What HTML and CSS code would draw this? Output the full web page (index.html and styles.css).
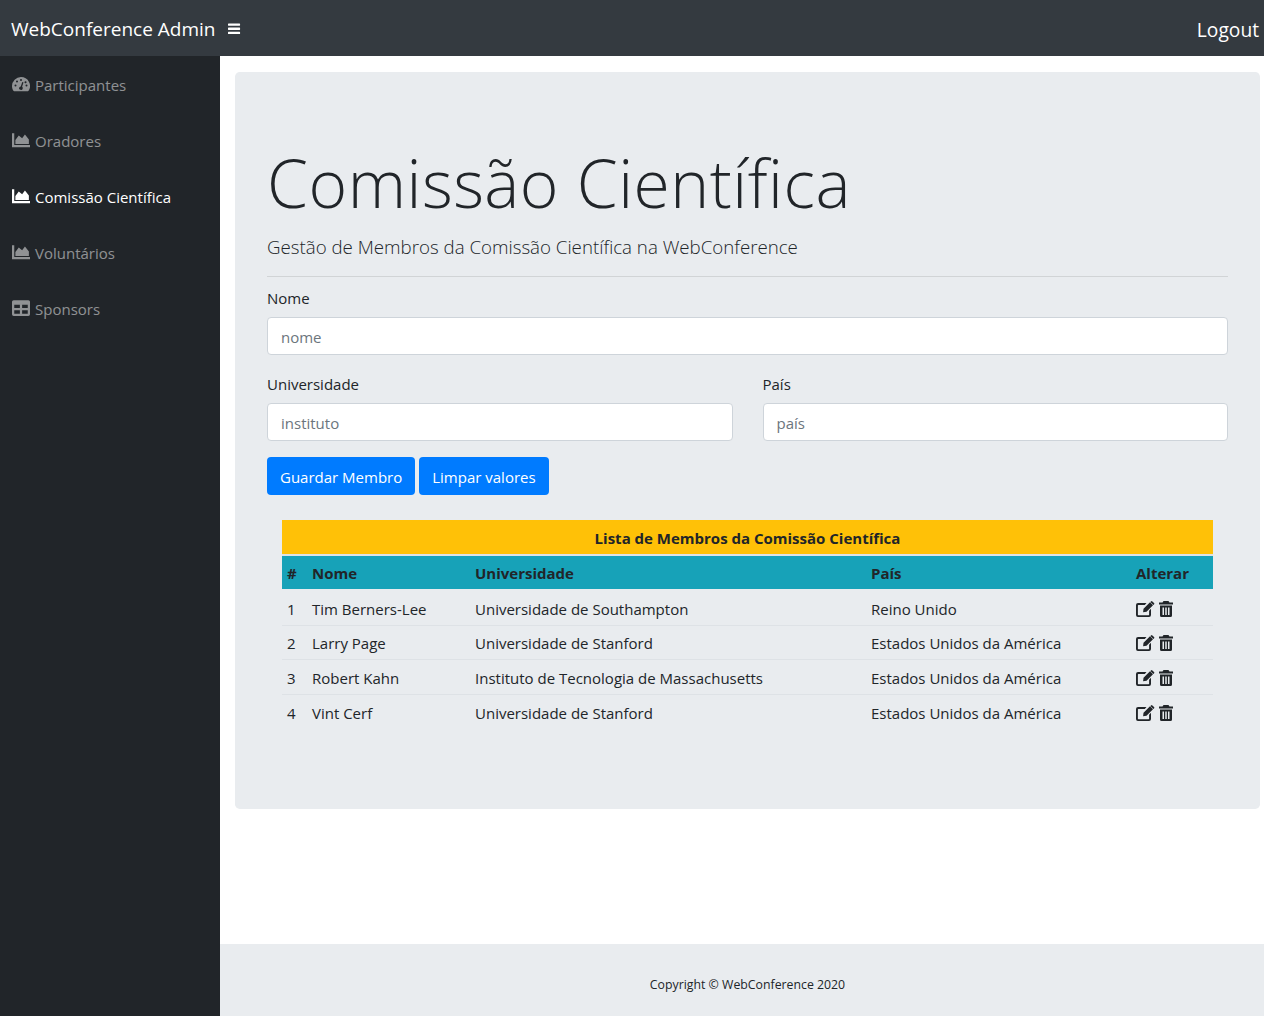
FILE: index.html
```html
<!DOCTYPE html>
<html lang="pt">
<head>
    <meta charset="UTF-8">
    <title>WebConference Admin</title>
    <link rel="stylesheet" href="styles.css">
</head>
<body>
    <!-- Barra de topo -->
    <nav class="topbar">
        <span class="brand">WebConference Admin</span>
        <svg class="burger" viewBox="0 0 14 12"><path d="M.5 0h12a.5.500 0 0 1 .5.500V2a.5.500 0 0 1-.5.500H.5A.5.500 0 0 1 0 2V.5A.5.500 0 0 1 .5 0zM.5 4.500h12a.5.500 0 0 1 .5.500v1.500a.5.500 0 0 1-.5.500H.5a.5.500 0 0 1-.5-.5V5a.5.500 0 0 1 .5-.5zM.5 9h12a.5.500 0 0 1 .5.500V11a.5.500 0 0 1-.5.500H.5A.5.500 0 0 1 0 11V9.500A.5.500 0 0 1 .5 9z" fill="currentColor"/></svg>
        <span class="logout">Logout</span>
    </nav>

    <div class="wrapper">
        <!-- Menu lateral -->
        <aside class="sidebar">
            <a class="side-link"><svg class="side-icon" viewBox="0 0 18 16"><path fill="currentColor" fill-rule="evenodd" d="M9 1a9 9 0 0 0-9 9c0 1.800.5 3.400 1.400 4.800.2.300.5.400.8.400h13.600c.3 0 .6-.1.800-.4A9 9 0 0 0 9 1zM9 3a1 1 0 1 1 0 2 1 1 0 0 1 0-2zM3.500 10.500a1 1 0 1 1 0-2 1 1 0 0 1 0 2zM5 6.500a1 1 0 1 1 0-2 1 1 0 0 1 0 2zM10.700 12.500a1.800 1.800 0 1 1-3.400-1.100c.3-.6 1-1 1.500-1l1.300-4a.7.7 0 0 1 1.300.4l-1.300 4c.5.400.8 1.100.6 1.700zM12.500 6a1 1 0 1 1 2 .5 1 1 0 0 1-2-.5zM14.500 10.500a1 1 0 1 1 0-2 1 1 0 0 1 0 2z"/></svg>Participantes</a>
            <a class="side-link"><svg class="side-icon" viewBox="0 0 16 14"><path fill="currentColor" d="M0 1h2v10.500h14V13.500H0zM3 10.500V7l3-4 3 2.500L11.500 2 15 6.500v4z"/></svg>Oradores</a>
            <a class="side-link active"><svg class="side-icon" viewBox="0 0 16 14"><path fill="currentColor" d="M0 1h2v10.500h14V13.500H0zM3 10.500V7l3-4 3 2.500L11.500 2 15 6.500v4z"/></svg>Comissão Científica</a>
            <a class="side-link"><svg class="side-icon" viewBox="0 0 16 14"><path fill="currentColor" d="M0 1h2v10.500h14V13.500H0zM3 10.500V7l3-4 3 2.500L11.500 2 15 6.500v4z"/></svg>Voluntários</a>
            <a class="side-link"><svg class="side-icon" viewBox="0 0 16 14"><path fill="currentColor" fill-rule="evenodd" d="M1.500 0h13A1.500 1.500 0 0 1 16 1.500v11a1.500 1.500 0 0 1-1.500 1.500h-13A1.500 1.500 0 0 1 0 12.500v-11A1.500 1.500 0 0 1 1.500 0zM2 4v3h5V4zM9 4v3h5V4zM2 9v3h5V9zM9 9v3h5V9z"/></svg>Sponsors</a>
        </aside>

        <div class="main">
            <div class="content">
                <section class="jumbotron">
                    <h1 class="title">Comissão Científica</h1>
                    <p class="lead">Gestão de Membros da Comissão Científica na WebConference</p>
                    <hr class="divider">

                    <form>
                        <div class="field">
                            <label class="field-label">Nome</label>
                            <input class="field-input" type="text" placeholder="nome">
                        </div>
                        <div class="field-row">
                            <div class="field">
                                <label class="field-label">Universidade</label>
                                <input class="field-input" type="text" placeholder="instituto">
                            </div>
                            <div class="field">
                                <label class="field-label">País</label>
                                <input class="field-input" type="text" placeholder="país">
                            </div>
                        </div>
                        <div class="actions">
                            <button type="button" class="btn">Guardar Membro</button>
                            <button type="button" class="btn">Limpar valores</button>
                        </div>
                    </form>

                    <table class="members">
                        <colgroup>
                            <col class="col-num"><col class="col-name"><col class="col-uni"><col class="col-country"><col class="col-edit">
                        </colgroup>
                        <thead>
                            <tr class="row-title"><th colspan="5">Lista de Membros da Comissão Científica</th></tr>
                            <tr class="row-head">
                                <th>#</th>
                                <th>Nome</th>
                                <th>Universidade</th>
                                <th>País</th>
                                <th>Alterar</th>
                            </tr>
                        </thead>
                        <tbody>
                            <tr>
                                <td>1</td><td>Tim Berners-Lee</td><td>Universidade de Southampton</td><td>Reino Unido</td>
                                <td><svg class="act-icon" viewBox="0 0 19 16"><path fill="currentColor" d="M2 2h8.500L8.800 3.900H2.400a.5.500 0 0 0-.5.500v9.300c0 .3.200.5.500.5h10.200c.3 0 .5-.2.500-.5V9.700L15 7.800v6.200a2 2 0 0 1-2 2H2a2 2 0 0 1-2-2V4a2 2 0 0 1 2-2zM7.500 7.800 14 1.300l3 3-6.500 6.500-3.400.4zM15 .4a1 1 0 0 1 1.400 0l1.600 1.600a1 1 0 0 1 0 1.400l-.6.600-3-3z"/></svg><svg class="act-icon trash" viewBox="0 0 14 16"><path fill="currentColor" fill-rule="evenodd" d="M4.500 0h5l1 1.500H14V3.500H0V1.500h3.500zM1 4.500h12V14.500A1.500 1.500 0 0 1 11.500 16h-9A1.500 1.500 0 0 1 1 14.500zM3.500 6.500v7.500h1.500V6.500zM6.250 6.500v7.500h1.500V6.500zM9 6.500v7.500h1.500V6.500z"/></svg></td>
                            </tr>
                            <tr>
                                <td>2</td><td>Larry Page</td><td>Universidade de Stanford</td><td>Estados Unidos da América</td>
                                <td><svg class="act-icon" viewBox="0 0 19 16"><path fill="currentColor" d="M2 2h8.500L8.800 3.900H2.400a.5.500 0 0 0-.5.500v9.300c0 .3.200.5.500.5h10.200c.3 0 .5-.2.500-.5V9.700L15 7.800v6.200a2 2 0 0 1-2 2H2a2 2 0 0 1-2-2V4a2 2 0 0 1 2-2zM7.500 7.800 14 1.300l3 3-6.500 6.500-3.400.4zM15 .4a1 1 0 0 1 1.400 0l1.600 1.600a1 1 0 0 1 0 1.400l-.6.600-3-3z"/></svg><svg class="act-icon trash" viewBox="0 0 14 16"><path fill="currentColor" fill-rule="evenodd" d="M4.500 0h5l1 1.500H14V3.500H0V1.500h3.500zM1 4.500h12V14.500A1.500 1.500 0 0 1 11.500 16h-9A1.500 1.500 0 0 1 1 14.500zM3.500 6.500v7.500h1.500V6.500zM6.250 6.500v7.500h1.500V6.500zM9 6.500v7.500h1.500V6.500z"/></svg></td>
                            </tr>
                            <tr>
                                <td>3</td><td>Robert Kahn</td><td>Instituto de Tecnologia de Massachusetts</td><td>Estados Unidos da América</td>
                                <td><svg class="act-icon" viewBox="0 0 19 16"><path fill="currentColor" d="M2 2h8.500L8.800 3.900H2.400a.5.500 0 0 0-.5.500v9.300c0 .3.200.5.500.5h10.200c.3 0 .5-.2.500-.5V9.700L15 7.800v6.200a2 2 0 0 1-2 2H2a2 2 0 0 1-2-2V4a2 2 0 0 1 2-2zM7.500 7.800 14 1.300l3 3-6.500 6.500-3.400.4zM15 .4a1 1 0 0 1 1.400 0l1.600 1.600a1 1 0 0 1 0 1.400l-.6.600-3-3z"/></svg><svg class="act-icon trash" viewBox="0 0 14 16"><path fill="currentColor" fill-rule="evenodd" d="M4.500 0h5l1 1.500H14V3.500H0V1.500h3.500zM1 4.500h12V14.500A1.500 1.500 0 0 1 11.500 16h-9A1.500 1.500 0 0 1 1 14.500zM3.500 6.500v7.500h1.500V6.500zM6.250 6.500v7.500h1.500V6.500zM9 6.500v7.500h1.500V6.500z"/></svg></td>
                            </tr>
                            <tr>
                                <td>4</td><td>Vint Cerf</td><td>Universidade de Stanford</td><td>Estados Unidos da América</td>
                                <td><svg class="act-icon" viewBox="0 0 19 16"><path fill="currentColor" d="M2 2h8.500L8.800 3.900H2.400a.5.500 0 0 0-.5.500v9.300c0 .3.200.5.500.5h10.200c.3 0 .5-.2.500-.5V9.700L15 7.800v6.200a2 2 0 0 1-2 2H2a2 2 0 0 1-2-2V4a2 2 0 0 1 2-2zM7.500 7.800 14 1.300l3 3-6.500 6.500-3.400.4zM15 .4a1 1 0 0 1 1.400 0l1.600 1.600a1 1 0 0 1 0 1.400l-.6.600-3-3z"/></svg><svg class="act-icon trash" viewBox="0 0 14 16"><path fill="currentColor" fill-rule="evenodd" d="M4.500 0h5l1 1.500H14V3.500H0V1.500h3.500zM1 4.500h12V14.500A1.500 1.500 0 0 1 11.500 16h-9A1.500 1.500 0 0 1 1 14.500zM3.500 6.500v7.500h1.500V6.500zM6.250 6.500v7.500h1.500V6.500zM9 6.500v7.500h1.500V6.500z"/></svg></td>
                            </tr>
                        </tbody>
                    </table>
                </section>
            </div>
            <footer class="footer">Copyright © WebConference 2020</footer>
        </div>
    </div>
</body>
</html>
```

FILE: styles.css
```css
* {
    box-sizing: border-box;
}
body {
    font-family: "Open Sans", "Noto Sans", sans-serif;
    font-size: 15px;
    color: #212529;
    margin: 0;
    height: 1016px;
    overflow: hidden;
    display: flex;
    flex-direction: column;
}
.topbar {
    height: 56px;
    flex: none;
    display: flex;
    align-items: center;
    padding: 2px 5px 0 11px;
    background: #343a40;
    color: white;
}
.brand {
    font-size: 19px;
}
.burger {
    width: 13px;
    height: 12px;
    margin: 0 0 0 13px;
}
.logout {
    margin-left: auto;
    font-size: 19.200px;
}
.wrapper {
    flex: 1;
    display: flex;
    min-height: 0;
}
.sidebar {
    width: 220px;
    flex: none;
    background: #212529;
    display: flex;
    flex-direction: column;
}
.side-link {
    height: 56px;
    display: flex;
    align-items: center;
    padding: 2px 0 0 12px;
    color: rgba(255, 255, 255, 0.5);
    font-size: 15px;
}
.side-link.active {
    color: white;
}
.side-icon {
    width: 18px;
    height: 16px;
    margin: 0 5px 2px 0;
}
.main {
    flex: 1;
    display: flex;
    flex-direction: column;
    min-width: 0;
}
.content {
    flex: 1;
    padding: 16px 4px 0 15px;
}
.jumbotron {
    background: #e9ecef;
    border-radius: 4.800px;
    padding: 64px 32px;
    height: 737px;
}
.title {
    font-size: 66px;
    font-weight: 300;
    line-height: 77px;
    letter-spacing: 0.500px;
    margin: 8px 0 10px;
}
.lead {
    font-size: 18.700px;
    font-weight: 300;
    margin: 0;
    line-height: 32px;
}
.divider {
    border: 0;
    border-top: 1px solid rgba(0, 0, 0, 0.1);
    margin: 13px 0 0;
}
.field {
    flex: 1;
    margin-top: 9px;
}
.field-label {
    display: block;
    line-height: 24px;
    margin-bottom: 7px;
}
.field-input {
    display: block;
    width: 100%;
    height: 38px;
    padding: 8px 13px 6px;
    border: 1px solid #ced4da;
    border-radius: 4px;
    background: white;
    font: inherit;
}
.field-input::placeholder {
    color: #6c757d;
}
.field-row {
    display: flex;
    gap: 30px;
    margin-top: 8px;
}
.actions {
    display: flex;
    gap: 4px;
    margin-top: 16px;
}
.btn {
    height: 38px;
    padding: 2px 13px 0;
    border: 0;
    border-radius: 4px;
    background: #007bff;
    color: white;
    font: inherit;
}
.members {
    width: 931px;
    margin: 25px 0 0 15px;
    border-collapse: collapse;
    table-layout: fixed;
}
.row-title th {
    height: 35px;
    padding-top: 2px;
    background: #ffc107;
    border-bottom: 2px solid #dee2e6;
    text-align: center;
    font-weight: 700;
}
.row-head th {
    height: 34px;
    background: #17a2b8;
    text-align: left;
    padding: 0 5px;
    font-weight: 700;
}
.members td {
    height: 34.700px;
    padding: 2px 5px 0;
    border-top: 1px solid #dee2e6;
    white-space: nowrap;
}
.members tbody tr:first-child td {
    border-top: 0;
    height: 36px;
    padding-top: 4px;
}
.members tbody tr:last-child td {
    height: 35px;
}
.col-num { width: 25px; }
.col-name { width: 163px; }
.col-uni { width: 396px; }
.col-country { width: 265px; }
.act-icon {
    width: 19px;
    height: 16px;
    vertical-align: -2px;
}
.trash {
    width: 14px;
    margin-left: 4px;
}
.footer {
    height: 72px;
    flex: none;
    background: #e9ecef;
    display: flex;
    align-items: center;
    justify-content: center;
    padding-top: 8px;
    padding-left: 11px;
    font-size: 12.300px;
}
```
